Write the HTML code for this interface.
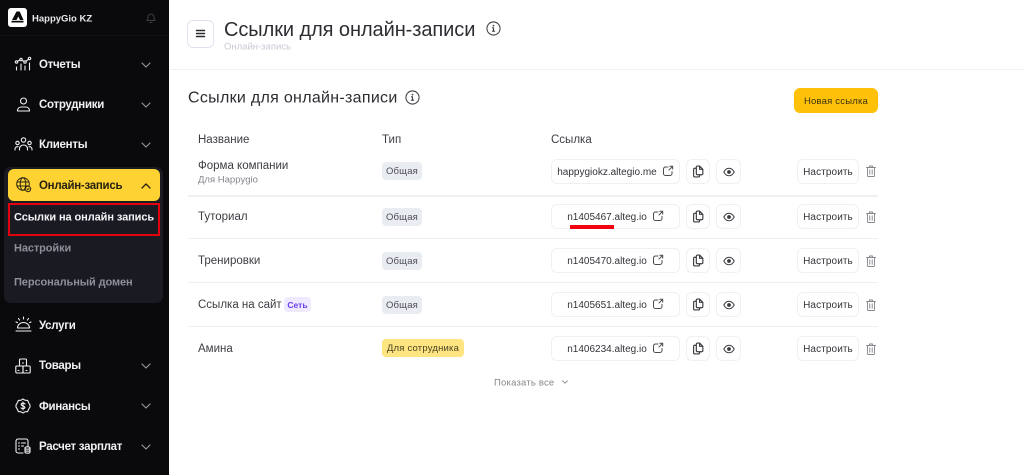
<!DOCTYPE html>
<html lang="ru"><head><meta charset="utf-8"><title>Ссылки для онлайн-записи</title>
<style>
*{box-sizing:border-box}
html,body{margin:0;padding:0;width:1024px;height:475px;overflow:hidden;background:#fff;font-family:"Liberation Sans",sans-serif}
.a{position:absolute}
.t{position:absolute;white-space:nowrap;transform:translateY(calc(-50% + var(--o,2px)));line-height:1.2}
.m{left:39px;color:#f2f2f4;font-size:11.5px;font-weight:700;letter-spacing:-.28px}
.s{left:14px;color:#8f8f9a;font-size:11px;font-weight:700;letter-spacing:-.1px}
.b{position:absolute;background:#fff;border:1px solid #eef0f3;border-radius:6px;height:25px}
.link{left:551px;width:129px;font-size:10px;color:#33343a;display:flex;align-items:center;justify-content:center;gap:5px;white-space:nowrap;padding-top:2px}
.link svg{margin-top:-3px}
.cp{left:686px;width:24px}.ey{left:716px;width:25px}
.set{left:797px;width:62px;font-size:10px;color:#33343a;display:flex;align-items:center;justify-content:center;letter-spacing:.1px;padding-top:2px}
.g{position:absolute;left:382px;width:40px;height:18px;background:#e9ecf1;border-radius:4px;color:#4c4e55;font-size:9.5px;letter-spacing:.2px;display:flex;align-items:center;justify-content:center}
.n{left:198px;font-size:11.5px;color:#3c3d43;letter-spacing:0}
.h{font-size:11.5px;color:#3c3d43;letter-spacing:0;top:139px}
.d{position:absolute;left:188px;width:690px;height:1px;background:#eef0f2}
svg{display:block;overflow:visible}
svg.a{fill:none;stroke-linecap:round;stroke-linejoin:round}
.w{stroke:#f0f0f2;stroke-width:1.1}
</style></head><body>
<svg width="0" height="0" style="position:absolute"><defs>
<symbol id="chev" viewBox="0 0 10 6"><path d="M1 1l4 4 4-4" fill="none" stroke="#9a9aa2" stroke-width="1.1" stroke-linecap="round" stroke-linejoin="round"/></symbol>
<symbol id="ext" viewBox="0 0 12 12"><path d="M6 2H3.500A2 2 0 0 0 1.500 4v4.500a2 2 0 0 0 2 2H8a2 2 0 0 0 2-2V6.500M7 5l3.500-3.500M7.800 1.200h2.900v2.900" fill="none" stroke="#4b4c52" stroke-width="1" stroke-linecap="round" stroke-linejoin="round"/></symbol>
<symbol id="copy" viewBox="0 0 12 12"><path d="M4 3H2.500a1 1 0 0 0-1 1v6a1 1 0 0 0 1 1h3.500a1 1 0 0 0 1-1V9M4 2a1 1 0 0 1 1-1h2l3 3v4a1 1 0 0 1-1 1H5a1 1 0 0 1-1-1zM7 1v3h3" fill="none" stroke="#3a3b40" stroke-width="1.050" stroke-linejoin="round"/></symbol>
<symbol id="eye" viewBox="0 0 12 10"><path d="M.8 5C2.200 2.400 4 1.200 6 1.200S9.800 2.400 11.200 5C9.800 7.600 8 8.800 6 8.800S2.200 7.600.8 5z" fill="none" stroke="#3a3b40" stroke-width="1"/><circle cx="6" cy="5" r="1.900" fill="#3a3b40"/></symbol>
<symbol id="trash" viewBox="0 0 10 12"><path d="M.5 2.500h9M3.500 2.500V1h3v1.500M1.500 2.500v8a1 1 0 0 0 1 1h5a1 1 0 0 0 1-1v-8M3.800 4.800v4.500M6.200 4.800v4.500" fill="none" stroke="#85868c" stroke-width=".9" stroke-linecap="round"/></symbol>
<symbol id="info" viewBox="0 0 16 16"><circle cx="8" cy="8" r="7" fill="none" stroke="#3d3e44" stroke-width="1.100"/><path d="M6.900 7.200H8v3.600M6.800 10.900h2.400" fill="none" stroke="#3d3e44" stroke-width="1.200"/><circle cx="8" cy="4.900" r=".9" fill="#3d3e44"/></symbol>
</defs></svg>

<!-- Sidebar -->
<div class="a" style="left:0;top:0;width:169px;height:475px;background:#0a0a0c"></div>
<div class="a" style="left:0;top:35px;width:169px;height:1px;background:#121215"></div>
<div class="a" style="left:8px;top:8px;width:19px;height:19px;background:#fff;border-radius:3px"></div>
<svg class="a" style="left:10px;top:10px" width="15" height="15" viewBox="0 0 15 15"><path d="M6.500 1.500h3.200L13.500 10H10L8.300 6.500 6.500 10H2z" fill="#0a0a0c"/><rect x="1.500" y="10.800" width="12" height="1.700" fill="#0a0a0c"/></svg>
<div class="t" style="left:32px;top:17px;color:#e8e8ea;font-size:9.500px;font-weight:700">HappyGio KZ</div>
<svg class="a" style="left:146px;top:12px;stroke:#3f3f45;stroke-width:1" width="10" height="12" viewBox="0 0 10 12"><path d="M1 8.500c1-1 1-2 1-3.500a3 3 0 0 1 6 0c0 1.500 0 2.500 1 3.500zM4 10.500h2"/></svg>

<div class="a" style="left:4px;top:167px;width:159px;height:136px;background:#1a1a23;border-radius:7px"></div>
<div class="a" style="left:8px;top:169px;width:152px;height:32px;background:#ffd233;border-radius:6px"></div>
<div class="a" style="left:8px;top:203px;width:152px;height:33px;border:2px solid #e3000f"></div>

<svg class="a w" style="left:15px;top:56px" width="16" height="16" viewBox="0 0 16 16"><circle cx="1.500" cy="6" r="1.200"/><circle cx="6" cy="3.500" r="1.200"/><circle cx="10" cy="6" r="1.200"/><circle cx="14.500" cy="2.500" r="1.200"/><path d="M2.500 5.300L5 4M7 4.200L9 5.400M11 5.200L13.500 3.300M1.500 11v3M6 8v6M10 10v4M14.500 7v7"/></svg>
<div class="t m" style="top:64px">Отчеты</div>
<svg class="a w" style="left:16px;top:97px" width="15" height="15" viewBox="0 0 15 15"><circle cx="7.500" cy="4" r="3"/><path d="M1.500 14v-1a4 4 0 0 1 4-3h4a4 4 0 0 1 4 3v1z"/></svg>
<div class="t m" style="top:104px">Сотрудники</div>
<svg class="a w" style="left:14px;top:137px" width="19" height="14" viewBox="0 0 19 14"><circle cx="9.500" cy="3" r="2.200"/><circle cx="3.500" cy="6" r="1.700"/><circle cx="15.500" cy="6" r="1.700"/><path d="M5.500 13v-1.500a4 3.500 0 0 1 8 0V13M1 13v-1a2.500 2.500 0 0 1 3-2.300M18 13v-1a2.500 2.500 0 0 0-3-2.300"/></svg>
<div class="t m" style="top:144px">Клиенты</div>
<svg class="a" style="left:16px;top:177px;stroke:#2a2510;stroke-width:1" width="15" height="15" viewBox="0 0 15 15"><circle cx="7" cy="7" r="6.300"/><ellipse cx="7" cy="7" rx="2.800" ry="6.300"/><path d="M1 5h12M1 9h12"/><circle cx="12" cy="12" r="2.700" fill="#ffd233"/><path d="M11 12l.8.800 1.200-1.300"/></svg>
<div class="t m" style="top:185px;color:#25220f">Онлайн-запись</div>
<svg class="a" style="left:141px;top:183px" width="10" height="6" viewBox="0 0 10 6"><path d="M1 5l4-4 4 4" fill="none" stroke="#25220f" stroke-width="1.300" stroke-linecap="round"/></svg>
<div class="t" style="left:14px;top:216px;color:#f5f5f7;font-size:11px;font-weight:700;letter-spacing:-.09px">Ссылки на онлайн запись</div>
<div class="t s" style="top:247px">Настройки</div>
<div class="t s" style="top:281px">Персональный домен</div>
<svg class="a w" style="left:15px;top:316px" width="17" height="16" viewBox="0 0 17 16"><path d="M2.500 12a6 5.500 0 0 1 12 0zM1 15h15M8.500 1v2M3.500 2.500l1 1.500M13.500 2.500l-1 1.500M1 6l1.500.6M16 6l-1.500.6"/></svg>
<div class="t m" style="top:325px">Услуги</div>
<svg class="a w" style="left:15px;top:358px" width="16" height="16" viewBox="0 0 16 16"><rect x="4.500" y="1" width="7" height="7" rx="1"/><rect x=".8" y="8" width="7.200" height="7" rx="1"/><rect x="8" y="8" width="7.200" height="7" rx="1"/><path d="M3 12.500h1M11 12.500h1M7.500 5h1"/></svg>
<div class="t m" style="top:365px">Товары</div>
<svg class="a w" style="left:15px;top:398px" width="16" height="16" viewBox="0 0 16 16"><path d="M8 1l2 1.200 2.600.2 1 2.200L15 7v2l-1.400 2.400-1 2.200-2.600.2L8 15l-2-1.200-2.600-.2-1-2.200L1 9V7l1.400-2.400 1-2.200L6 2.200z"/><path d="M10 6c-.5-1-3.500-1.300-3.800.4C6 8 10 7.800 9.900 9.600 9.700 11 6.600 11 6 9.900M8 4v8"/></svg>
<div class="t m" style="top:406px">Финансы</div>
<svg class="a w" style="left:15px;top:438px" width="16" height="16" viewBox="0 0 16 16"><path d="M8 15H3a2 2 0 0 1-2-2V3a2 2 0 0 1 2-2h8a2 2 0 0 1 2 2v5M3.500 5h1M6.500 5h4M3.500 8h1M6.500 8h2M3.500 11h1"/><ellipse cx="12.500" cy="10" rx="2.500" ry="1.200"/><path d="M10 10v4c0 1.600 5 1.600 5 0v-4M10 12c0 1.600 5 1.600 5 0"/></svg>
<div class="t m" style="top:446px">Расчет зарплат</div>
<svg class="a" style="left:141px;top:62px" width="10" height="6"><use href="#chev"/></svg>
<svg class="a" style="left:141px;top:102px" width="10" height="6"><use href="#chev"/></svg>
<svg class="a" style="left:141px;top:142px" width="10" height="6"><use href="#chev"/></svg>
<svg class="a" style="left:141px;top:363px" width="10" height="6"><use href="#chev"/></svg>
<svg class="a" style="left:141px;top:403px" width="10" height="6"><use href="#chev"/></svg>
<svg class="a" style="left:141px;top:444px" width="10" height="6"><use href="#chev"/></svg>

<!-- Header -->
<div class="a" style="left:187px;top:20px;width:27px;height:28px;border:1px solid #dfe3ee;border-radius:6px"></div>
<svg class="a" style="left:196px;top:29px" width="9" height="9" viewBox="0 0 9 9"><path d="M.5 1.500h8M.5 4.500h8M.5 7.500h8" stroke="#2c2d32" stroke-width="1.500"/></svg>
<div class="t" style="--o:1px;left:224px;top:29px;font-size:20px;color:#2c2d32;letter-spacing:-.07px">Ссылки для онлайн-записи</div>
<div class="t" style="--o:1px;left:224px;top:46px;font-size:9.500px;color:#c6cad3">Онлайн-запись</div>
<svg class="a" style="left:486px;top:21px" width="15" height="15"><use href="#info"/></svg>
<div class="a" style="left:170px;top:69px;width:854px;height:1px;background:#f0f1f3"></div>

<div class="t" style="--o:1px;left:188px;top:97px;font-size:16px;color:#2c2d32;letter-spacing:.3px">Ссылки для онлайн-записи</div>
<svg class="a" style="left:405px;top:90px" width="15" height="15"><use href="#info"/></svg>
<div class="a" style="left:794px;top:88px;width:84px;height:25px;background:#ffc107;border-radius:6px;color:#3a3210;font-size:9.500px;display:flex;align-items:center;justify-content:center;letter-spacing:.2px;padding-top:1px">Новая ссылка</div>

<!-- Table -->
<div class="t h" style="left:198px">Название</div>
<div class="t h" style="left:382px">Тип</div>
<div class="t h" style="left:551px">Ссылка</div>

<div class="d" style="top:195px;height:2px"></div>
<div class="d" style="top:238px"></div>
<div class="d" style="top:282px"></div>
<div class="d" style="top:326px"></div>

<div class="t n" style="top:165px">Форма компании</div>
<div class="t" style="--o:1px;left:198px;top:179px;font-size:9.500px;color:#84858c">Для Happygio</div>
<div class="g" style="top:162px">Общая</div>
<div class="b link" style="top:159px">happygiokz.altegio.me<svg width="12" height="12"><use href="#ext"/></svg></div>
<div class="b cp" style="top:159px"><svg class="a" style="left:5px;top:5px" width="13" height="13"><use href="#copy"/></svg></div>
<div class="b ey" style="top:159px"><svg class="a" style="left:6px;top:7px" width="12" height="10"><use href="#eye"/></svg></div>
<div class="b set" style="top:159px">Настроить</div>
<svg class="a" style="left:866px;top:165px" width="10" height="12"><use href="#trash"/></svg>

<div class="t n" style="top:216px">Туториал</div>
<div class="g" style="top:208px">Общая</div>
<div class="b link" style="top:204px">n1405467.alteg.io<svg width="12" height="12"><use href="#ext"/></svg></div>
<div class="b cp" style="top:204px"><svg class="a" style="left:5px;top:5px" width="13" height="13"><use href="#copy"/></svg></div>
<div class="b ey" style="top:204px"><svg class="a" style="left:6px;top:7px" width="12" height="10"><use href="#eye"/></svg></div>
<div class="b set" style="top:204px">Настроить</div>
<svg class="a" style="left:866px;top:211px" width="10" height="12"><use href="#trash"/></svg>
<div class="a" style="left:570px;top:225px;width:44px;height:4px;background:#f00010"></div>

<div class="t n" style="top:260px">Тренировки</div>
<div class="g" style="top:252px">Общая</div>
<div class="b link" style="top:248px">n1405470.alteg.io<svg width="12" height="12"><use href="#ext"/></svg></div>
<div class="b cp" style="top:248px"><svg class="a" style="left:5px;top:5px" width="13" height="13"><use href="#copy"/></svg></div>
<div class="b ey" style="top:248px"><svg class="a" style="left:6px;top:7px" width="12" height="10"><use href="#eye"/></svg></div>
<div class="b set" style="top:248px">Настроить</div>
<svg class="a" style="left:866px;top:255px" width="10" height="12"><use href="#trash"/></svg>

<div class="t n" style="top:304px">Ссылка на сайт</div>
<div class="a" style="left:284px;top:297px;width:27px;height:15px;background:#efeaff;border-radius:4px;color:#6a3df0;font-size:8.500px;font-weight:700;display:flex;align-items:center;justify-content:center">Сеть</div>
<div class="g" style="top:296px">Общая</div>
<div class="b link" style="top:292px">n1405651.alteg.io<svg width="12" height="12"><use href="#ext"/></svg></div>
<div class="b cp" style="top:292px"><svg class="a" style="left:5px;top:5px" width="13" height="13"><use href="#copy"/></svg></div>
<div class="b ey" style="top:292px"><svg class="a" style="left:6px;top:7px" width="12" height="10"><use href="#eye"/></svg></div>
<div class="b set" style="top:292px">Настроить</div>
<svg class="a" style="left:866px;top:299px" width="10" height="12"><use href="#trash"/></svg>

<div class="t n" style="top:348px">Амина</div>
<div class="g" style="top:339px;width:82px;background:#ffe482;color:#4a4420">Для сотрудника</div>
<div class="b link" style="top:336px">n1406234.alteg.io<svg width="12" height="12"><use href="#ext"/></svg></div>
<div class="b cp" style="top:336px"><svg class="a" style="left:5px;top:5px" width="13" height="13"><use href="#copy"/></svg></div>
<div class="b ey" style="top:336px"><svg class="a" style="left:6px;top:7px" width="12" height="10"><use href="#eye"/></svg></div>
<div class="b set" style="top:336px">Настроить</div>
<svg class="a" style="left:866px;top:343px" width="10" height="12"><use href="#trash"/></svg>

<div class="t" style="--o:1px;left:494px;top:382px;font-size:9.500px;color:#85868c;letter-spacing:.2px">Показать все</div>
<svg class="a" style="left:562px;top:380px" width="6" height="4" viewBox="0 0 10 6"><path d="M1 1l4 4 4-4" fill="none" stroke="#85868c" stroke-width="1.500"/></svg>
</body></html>
